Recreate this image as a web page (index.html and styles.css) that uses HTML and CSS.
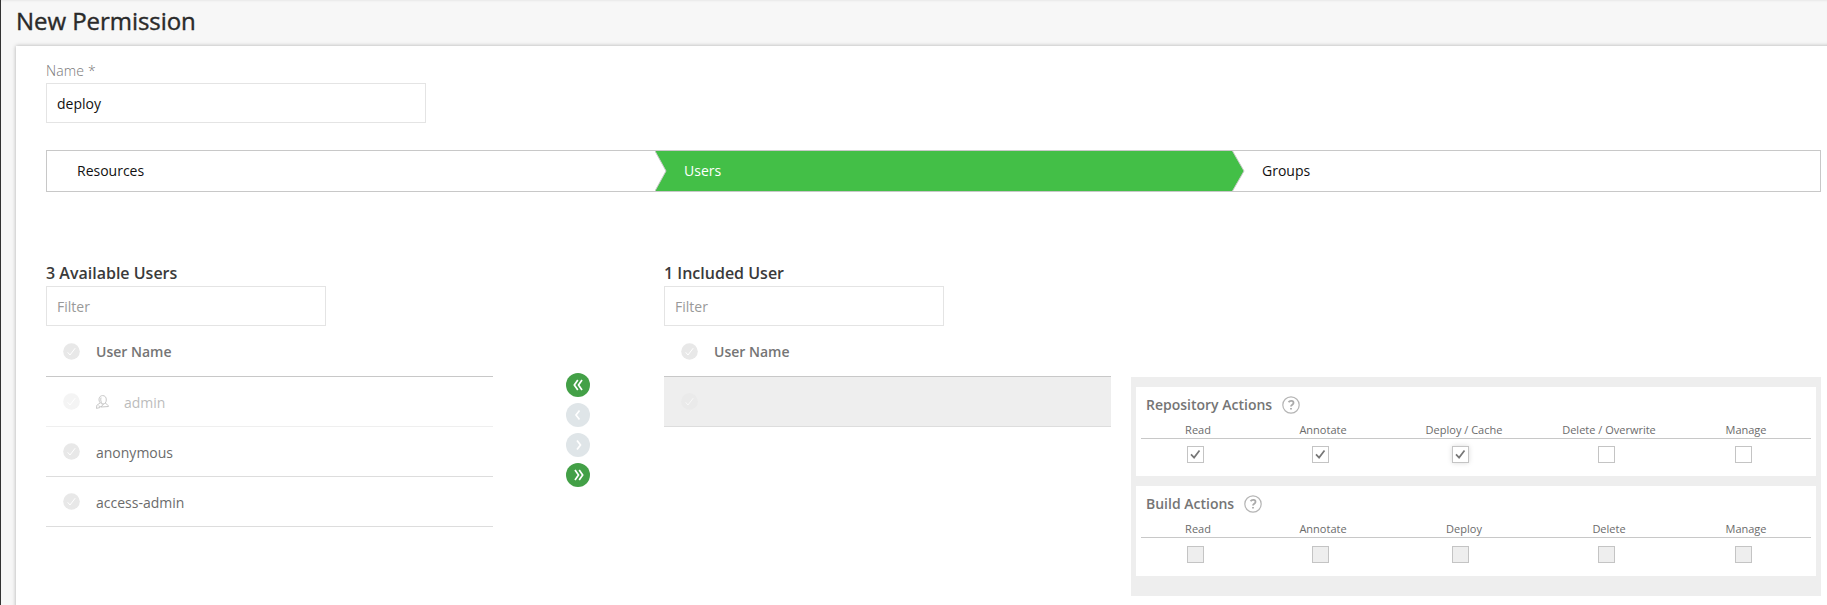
FILE: index.html
```
<!DOCTYPE html>
<html lang="en">
<head>
<meta charset="utf-8">
<title>New Permission</title>
<link rel="stylesheet" href="styles.css">
</head>
<body>
<svg class="defs" width="0" height="0">
  <symbol id="pick" viewBox="0 0 17 17"><circle cx="8.5" cy="8.5" r="8.3" fill="#e8e8e8"/><path d="M4.7 9.3 7 12 12.2 5.2" fill="none" stroke="#fff" stroke-width="1"/></symbol>
  <symbol id="tick" viewBox="0 0 15 15"><path d="M3 7.3 6.1 10.6 11.5 3.6" fill="none" stroke="#777" stroke-width="1.7"/></symbol>
  <symbol id="help" viewBox="0 0 18 18"><circle cx="9" cy="9" r="8.2" fill="none" stroke="#b5b5b5" stroke-width="1.2"/><path d="M6.6 6.2C7.6 4.4 11.6 4.3 11.5 6.900c0 1.800-2.500 1.900-2.500 3.700M9 11.900v1.700" fill="none" stroke="#aaa" stroke-width="1.800"/></symbol>
</svg>
<main class="page">
  <h1 class="title">New Permission</h1>
  <section class="card">
    <label class="label">Name *</label>
    <div class="input name">deploy</div>
    <nav class="steps">
      <div class="step first">Resources</div>
      <div class="step active">Users</div>
      <div class="step last">Groups</div>
      <svg class="arrows" width="590" height="40" viewBox="0 0 590 40"><path d="M0 0H577.500L589 20 577.500 40H0L11 20Z" fill="#43bf47"/><path d="M0 0 11 20 0 40M577.500 0 589 20 577.500 40" fill="none" stroke="#c8c8c8" stroke-width="1"/></svg>
    </nav>
    <div class="columns">
      <section class="list">
        <h2 class="count">3 Available Users</h2>
        <div class="input filter">Filter</div>
        <div class="row head"><svg class="pick"><use href="#pick"/></svg><span class="cell">User Name</span></div>
        <div class="row faded"><svg class="pick"><use href="#pick"/></svg><svg class="admin" viewBox="0 0 13 14"><path d="M3 5C3 1.500 5 .6 6.800.6S10.500 2 10.300 5C10.200 7.500 8.800 9 7 9S3.200 7.500 3 5ZM5 2.500C4.300 5 5 7 6 8.500M4 8 .8 10.300.5 13.400 4 12.500M2.500 10.800 5 12 12.400 11.500C12.300 9.800 10.500 9 9.200 8.200M5 12 7.500 9" fill="none" stroke="#777" stroke-width=".9"/></svg><span class="cell">admin</span></div>
        <div class="row"><svg class="pick"><use href="#pick"/></svg><span class="cell">anonymous</span></div>
        <div class="row"><svg class="pick"><use href="#pick"/></svg><span class="cell">access-admin</span></div>
      </section>
      <div class="movers">
        <button class="mover on"><svg viewBox="0 0 24 24"><path d="M11.800 7 8.300 12l3.500 5M16 7l-3.500 5 3.500 5"/></svg></button>
        <button class="mover"><svg viewBox="0 0 24 24"><path d="M13.500 7.500 10 12l3.500 4.500"/></svg></button>
        <button class="mover"><svg viewBox="0 0 24 24"><path d="M11 7.500 14.500 12 11 16.500"/></svg></button>
        <button class="mover on"><svg viewBox="0 0 24 24"><path d="M9 7l3.500 5L9 17M13.200 7l3.500 5-3.500 5"/></svg></button>
      </div>
      <section class="list">
        <h2 class="count">1 Included User</h2>
        <div class="input filter">Filter</div>
        <div class="row head"><svg class="pick"><use href="#pick"/></svg><span class="cell">User Name</span></div>
        <div class="row selected"><svg class="pick"><use href="#pick"/></svg></div>
      </section>
      <aside class="panel">
        <div class="actions">
          <h3 class="atitle"><span>Repository Actions</span><svg class="help"><use href="#help"/></svg></h3>
          <div class="grid names"><span>Read</span><span>Annotate</span><span>Deploy / Cache</span><span>Delete / Overwrite</span><span>Manage</span></div>
          <div class="grid boxes"><i class="box"><svg><use href="#tick"/></svg></i><i class="box"><svg><use href="#tick"/></svg></i><i class="box focus"><svg><use href="#tick"/></svg></i><i class="box"></i><i class="box"></i></div>
        </div>
        <div class="actions build">
          <h3 class="atitle"><span>Build Actions</span><svg class="help"><use href="#help"/></svg></h3>
          <div class="grid names"><span>Read</span><span>Annotate</span><span>Deploy</span><span>Delete</span><span>Manage</span></div>
          <div class="grid boxes"><i class="box off"></i><i class="box off"></i><i class="box off"></i><i class="box off"></i><i class="box off"></i></div>
        </div>
      </aside>
    </div>
  </section>
</main>
</body>
</html>
```

FILE: styles.css
```
* { box-sizing: border-box; }
body { margin: 0; height: 605px; overflow: hidden; background: #f7f7f7; font: 14px/20px "Open Sans", "Noto Sans", sans-serif; color: #6b6b6b; }
.defs { position: absolute; }
.page { height: 605px; border-left: 1px solid #333; padding-left: 15px; box-shadow: inset 0 2px 2px -1px #e8e8e8; overflow: hidden; }
.title { margin: 0; height: 46px; padding-top: 5px; font-size: 24px; line-height: 32px; font-weight: 400; letter-spacing: -.05px; color: #2a2a2a; -webkit-text-stroke: .4px #2a2a2a; }
.card { height: 570px; margin-right: -10px; padding: 14px 16px 0 30px; background: #fff; box-shadow: 0 0 4px rgba(0,0,0,.3); }
.label { display: block; height: 23px; line-height: 22px; font-weight: 300; letter-spacing: .15px; color: #777; }
.input { height: 40px; border: 1px solid #e4e4e4; padding: 0 10px; line-height: 40px; background: #fff; }
.name { width: 380px; color: #111; }
.filter { width: 280px; color: #999; }
.steps { position: relative; display: flex; width: 1775px; height: 42px; margin-top: 27px; border: 1px solid #c8c8c8; line-height: 40px; color: #111; }
.step { position: relative; z-index: 1; }
.first { width: 607px; padding-left: 30px; }
.active { width: 579px; padding-left: 30px; color: #fff; }
.last { padding-left: 29px; }
.arrows { position: absolute; left: 608px; top: 0; }
.columns { display: flex; width: 1775px; margin-top: 70px; }
.list { width: 447px; }
.count { margin: 0; height: 24px; font-size: 16px; line-height: 22px; font-weight: 600; color: #3a3a3a; }
.row { display: flex; align-items: center; height: 50px; padding-left: 16.5px; border-bottom: 1px solid #ddd; }
.cell { padding-top: 2px; }
.head { height: 51px; border-color: #c8c8c8; font-weight: 600; color: #757575; }
.pick { width: 17px; height: 17px; margin-right: 16.5px; flex: none; }
.faded { border-color: #efefef; }
.faded > * { opacity: .45; }
.admin { width: 13px; height: 14px; margin-right: 15px; }
.selected { background: #eee; }
.selected .pick { opacity: .6; }
.movers { width: 171px; padding: 111px 0 0 73px; display: flex; flex-direction: column; gap: 6px; }
.mover { width: 24px; height: 24px; padding: 0; border: 0; border-radius: 50%; background: #dfe5e8; }
.on { background: #43a047; }
.mover svg { display: block; width: 24px; height: 24px; fill: none; stroke: #fff; stroke-width: 1.7; }
.panel { width: 690px; height: 219px; margin: 115px 0 0 20px; padding: 10px 5px; background: #eee; }
.actions { height: 89px; padding: 0 5px; background: #fff; }
.build { height: 90px; margin-top: 10px; }
.atitle { display: flex; align-items: center; margin: 0; height: 35px; padding-left: 5px; font-size: 14px; font-weight: 600; color: #757575; }
.help { width: 18px; height: 18px; margin-left: 10px; }
.grid { display: grid; grid-template-columns: 114px 136px 146px 144px 130px; justify-items: center; }
.names { height: 17px; border-bottom: 1px solid #c8c8c8; font-size: 11px; line-height: 16px; }
.boxes { padding-top: 7px; }
.build .boxes { padding-top: 8px; }
.box { display: block; width: 17px; height: 17px; margin-right: 5px; border: 1px solid #c4c4c4; }
.box:nth-child(3) { margin-right: 7px; }
.box svg { display: block; width: 15px; height: 15px; }
.focus { box-shadow: 0 0 5px rgba(0,0,0,.15); }
.off { background: #eee; }
```
